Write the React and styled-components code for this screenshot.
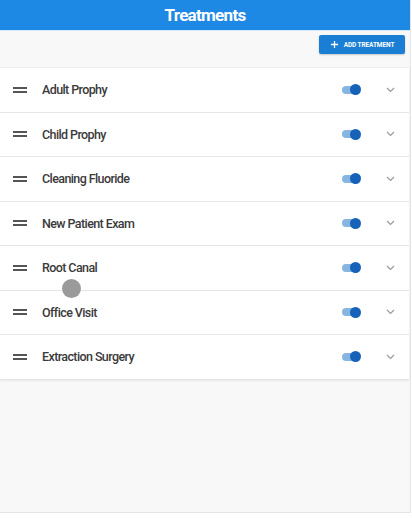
import React from "react";
import styled, { createGlobalStyle } from "styled-components";

const GlobalStyle = createGlobalStyle`
  body {
    margin: 0;
    background: #ffffff;
    font-family: Roboto, "Liberation Sans", sans-serif;
  }
`;

const treatments = [
  "Adult Prophy",
  "Child Prophy",
  "Cleaning Fluoride",
  "New Patient Exam",
  "Root Canal",
  "Office Visit",
  "Extraction Surgery",
];

function App() {
  return (
    <>
      <GlobalStyle />
      <Frame>
        <Header>Treatments</Header>
        <Toolbar>
          <AddButton>
            <svg width="9" height="9" viewBox="0 0 10 10">
              <path d="M5 1v8M1 5h8" stroke="#fff" strokeWidth="1.4" />
            </svg>
            ADD TREATMENT
          </AddButton>
        </Toolbar>
        <List>
          {treatments.map((name) => (
            <Row key={name}>
              <Handle>
                <span />
                <span />
              </Handle>
              <Name>{name}</Name>
              <Toggle>
                <Knob />
              </Toggle>
              <Chevron>
                <svg width="9" height="6" viewBox="0 0 9 6">
                  <path d="M1 1l3.5 3.5L8 1" fill="none" stroke="#9a9a9a" strokeWidth="1.2" />
                </svg>
              </Chevron>
            </Row>
          ))}
          <Touch />
        </List>
      </Frame>
    </>
  );
}

const Frame = styled.div`
  width: 410px;
  height: 512px;
  background: #f8f8f9;
  border-right: 1px solid #e4e4e6;
  border-bottom: 1px solid #e4e4e8;
  display: flex;
  flex-direction: column;
`;

const Header = styled.div`
  height: 30px;
  background: #1e88e5;
  color: #fff;
  font-size: 17px;
  font-weight: 700;
  letter-spacing: -0.7px;
  display: flex;
  align-items: center;
  justify-content: center;
  border-bottom: 1px solid #d6e8f7;
`;

const Toolbar = styled.div`
  height: 37px;
  display: flex;
  justify-content: flex-end;
  align-items: flex-start;
  padding: 4px 5px 0 0;
  box-sizing: border-box;
  border-bottom: 1px solid #eeeef0;
`;

const AddButton = styled.button`
  width: 86px;
  height: 19px;
  background: #1a7fd4;
  border: none;
  border-radius: 2px;
  color: #fff;
  font-family: Roboto, "Liberation Sans", sans-serif;
  font-size: 6.5px;
  font-weight: 700;
  letter-spacing: -0.1px;
  display: flex;
  align-items: center;
  justify-content: center;
  gap: 5px;
  padding: 0;
  box-shadow: 0 1px 2px rgba(0, 0, 0, 0.2);
`;

const List = styled.div`
  position: relative;
  background: #fff;
  box-shadow: 0 1px 2px rgba(0, 0, 0, 0.08);
  width: 409px;
`;

const Row = styled.div`
  height: 44.5px;
  display: flex;
  align-items: center;
  border-bottom: 1px solid #e6e6ea;
  box-sizing: border-box;
`;

const Handle = styled.div`
  width: 14px;
  margin-left: 13px;
  display: flex;
  flex-direction: column;
  gap: 2px;

  span {
    display: block;
    height: 2px;
    background: #555;
  }
`;

const Name = styled.div`
  margin-left: 15px;
  flex: 1;
  font-size: 12.5px;
  font-weight: 500;
  color: #3a3a3a;
  letter-spacing: -0.6px;
`;

const Toggle = styled.div`
  width: 16px;
  height: 8px;
  border-radius: 4px;
  background: #86b6e0;
  display: flex;
  align-items: center;
  justify-content: flex-end;
  margin-right: 28px;
`;

const Knob = styled.div`
  width: 11px;
  height: 11px;
  border-radius: 50%;
  background: #1562b8;
  margin-right: -3px;
  flex-shrink: 0;
`;

const Chevron = styled.div`
  width: 9px;
  margin-right: 14px;
  display: flex;
`;

const Touch = styled.div`
  position: absolute;
  left: 62px;
  top: 211px;
  width: 19px;
  height: 19px;
  border-radius: 50%;
  background: #9a9a9a;
`;

export default App;
